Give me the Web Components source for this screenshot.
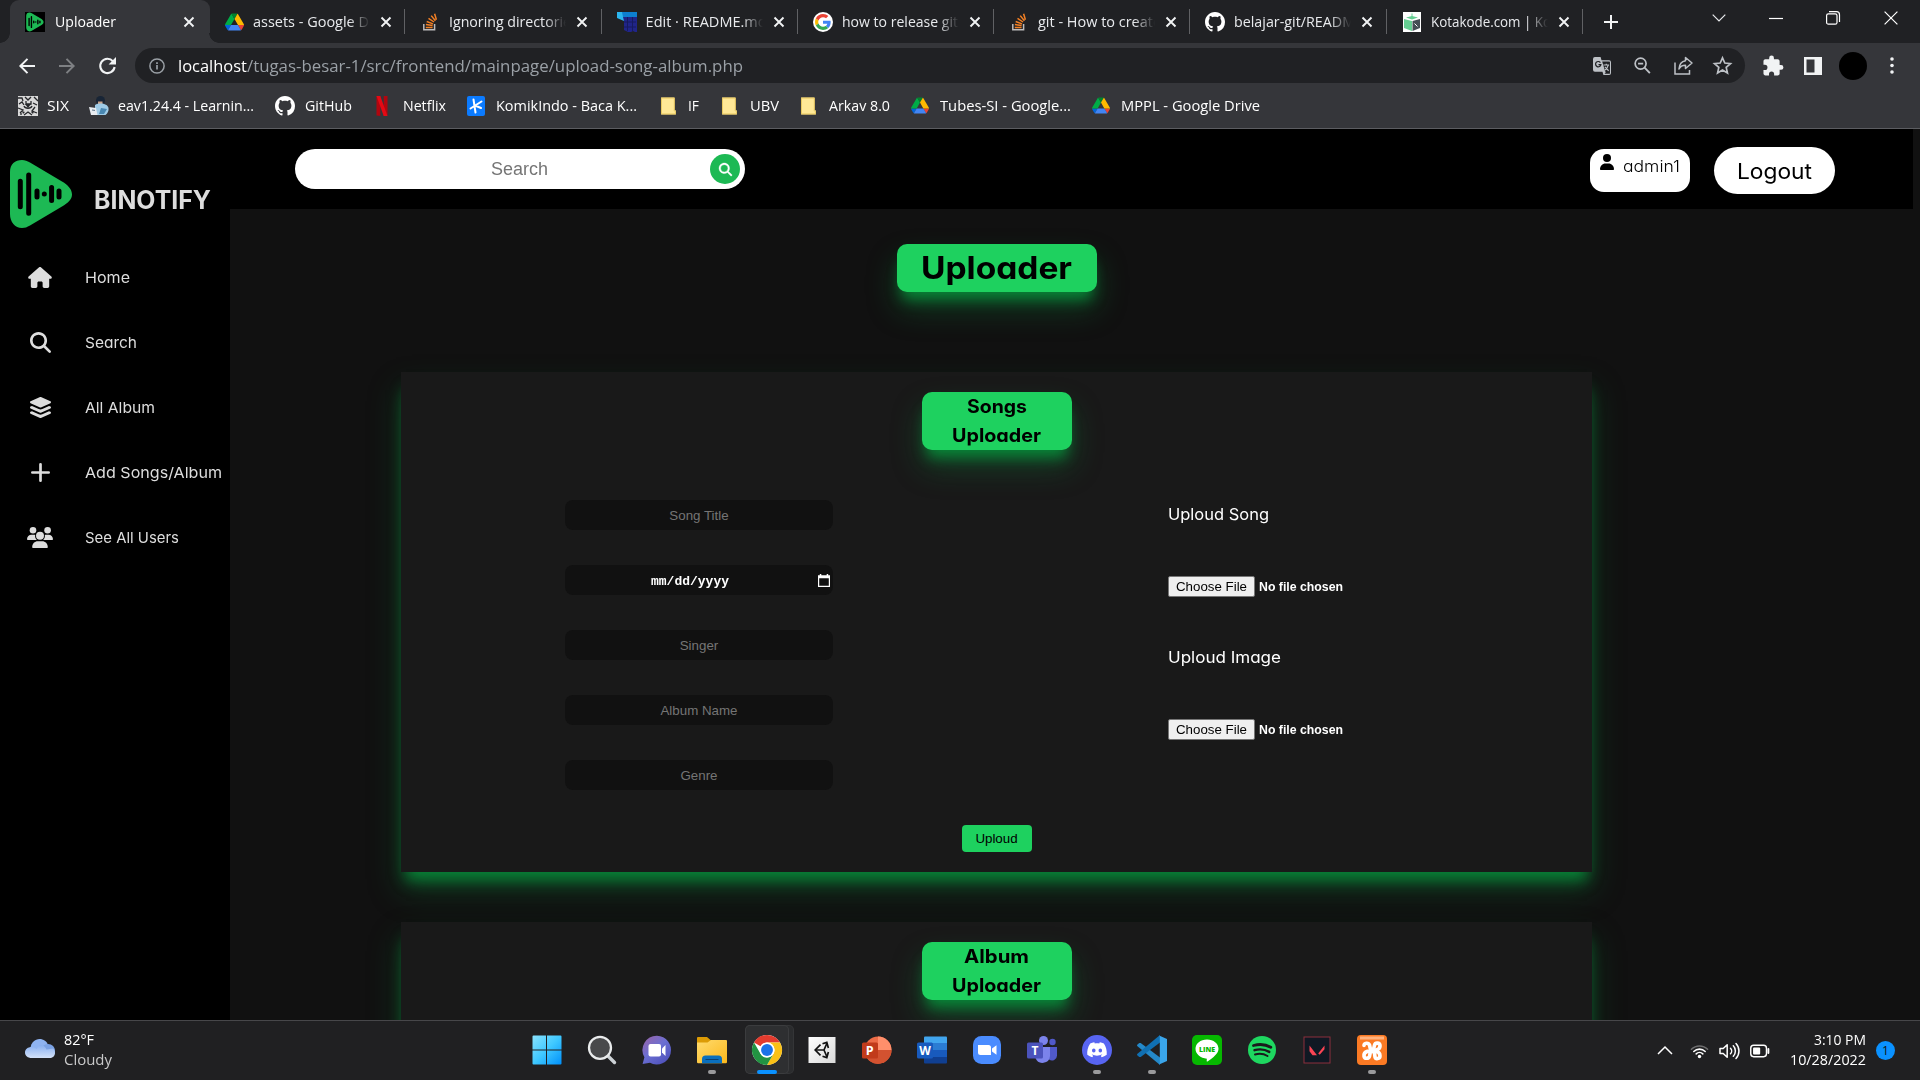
<!DOCTYPE html>
<html lang="en">
<head>
<meta charset="utf-8">
<title>Uploader</title>
<style>
html,body{margin:0;height:100%;background:#111;overflow:hidden}
body{font-family:"Open Sans","Noto Sans",sans-serif}
</style>
</head>
<body>
<desk-top></desk-top>
<script>
const GREEN='#1db954';
const GH='<path fill="#fff" d="M8 0C3.58 0 0 3.58 0 8c0 3.54 2.29 6.53 5.47 7.59.4.07.55-.17.55-.38 0-.19-.01-.82-.01-1.49-2.01.37-2.53-.49-2.69-.94-.09-.23-.48-.94-.82-1.13-.28-.15-.68-.52-.01-.53.63-.01 1.08.58 1.23.82.72 1.21 1.87.87 2.33.66.07-.52.28-.87.51-1.07-1.78-.2-3.64-.89-3.64-3.95 0-.87.31-1.59.82-2.15-.08-.2-.36-1.02.08-2.12 0 0 .67-.21 2.2.82.64-.18 1.32-.27 2-.27s1.36.09 2 .27c1.53-1.04 2.2-.82 2.2-.82.44 1.1.16 1.92.08 2.12.51.56.82 1.27.82 2.15 0 3.07-1.87 3.75-3.65 3.95.29.25.54.73.54 1.48 0 1.07-.01 1.93-.01 2.2 0 .21.15.46.55.38A8.01 8.01 0 0 0 16 8c0-4.42-3.58-8-8-8z"/>';
const SEARCH='M416 208c0 45.9-14.9 88.3-40 122.700L502.600 457.400c12.500 12.500 12.500 32.800 0 45.300s-32.800 12.500-45.300 0L330.700 376c-34.400 25.200-76.800 40-122.700 40C93.100 416 0 322.900 0 208S93.100 0 208 0S416 93.100 416 208zM208 352a144 144 0 1 0 0-288 144 144 0 1 0 0 288z';
const LOGO='<path fill="#1db954" d="M0 12C0 4 5 0 12 0c3 0 5 1 8 2.500L52 21.500c6 3.500 10 8 10 13s-4 8.500-10 12L20 65.500c-3 1.700-5 2.500-8 2.500C5 68 0 62 0 54z"/><g stroke="#000" stroke-linecap="round" stroke-width="5"><path d="M10.300 21.300v25.400M18.700 15v38.300M27 31v6M41.600 27.500v13M49 31v6"/><path d="M34.300 34v.01"/></g>';
const ICONS={
 logo:['0 0 62 68',LOGO],
 fav:['0 0 20 20','<path fill="#000" d="M0 0h20v20H0z"/><g transform="translate(1.200 .5) scale(.28)">'+LOGO+'</g>'],
 drive:['0 0 87.300 78','<path d="m6.600 66.850 3.850 6.650c.8 1.400 1.950 2.500 3.300 3.300l13.750-23.800h-27.500c0 1.550.4 3.100 1.200 4.500z" fill="#0066da"/><path d="m43.650 25-13.750-23.800c-1.350.8-2.500 1.900-3.300 3.300l-25.400 44a9.060 9.060 0 0 0 -1.200 4.500h27.500z" fill="#00ac47"/><path d="m73.550 76.800c1.350-.8 2.500-1.900 3.300-3.300l1.600-2.750 7.650-13.250c.8-1.400 1.200-2.950 1.200-4.500h-27.502l5.852 11.500z" fill="#ea4335"/><path d="m43.650 25 13.750-23.800c-1.350-.8-2.900-1.200-4.500-1.200h-18.500c-1.600 0-3.150.45-4.500 1.200z" fill="#00832d"/><path d="m59.800 53h-32.300l-13.750 23.800c1.350.8 2.900 1.200 4.500 1.200h50.800c1.600 0 3.150-.45 4.500-1.200z" fill="#4285f4"/><path d="m73.400 26.500-12.700-22c-.8-1.400-1.950-2.500-3.300-3.300l-13.750 23.800 16.150 28h27.450c0-1.550-.4-3.100-1.200-4.500z" fill="#ffba00"/>'],
 so:['0 0 16 18','<path d="M1.800 11v5.800h10.800V11" fill="none" stroke="#bcbbbb" stroke-width="1.500"/><g stroke="#f48024" stroke-width="1.500"><path d="M3.800 14.500h6.800M3.900 11.500l6.700 1.100M4.700 8.500l6.300 2.400M6.500 5.300l5.500 3.700M9.200 2.600l4.200 5.200M12.600.8l1.800 6"/></g>'],
 edit:['0 0 20 20','<path fill="#2bb5ee" d="M0 0h7v9L0 6z"/><path fill="#0d7fd0" d="M5 0h15v5H6z"/><path fill="#20258a" d="M6 5h14v15h-2l-2-1-2 1h-3l-4-2V9z"/><path stroke="#161b60" d="M10.500 5v14M15.500 5v14M7 10h12M7 15h12"/>'],
 google:['-6 -6 60 60','<circle cx="24" cy="24" r="30" fill="#fff"/><path fill="#EA4335" d="M24 9.500c3.540 0 6.710 1.220 9.210 3.600l6.850-6.850C35.900 2.380 30.470 0 24 0 14.620 0 6.510 5.380 2.560 13.220l7.980 6.190C12.430 13.720 17.740 9.500 24 9.500z"/><path fill="#4285F4" d="M46.980 24.550c0-1.570-.15-3.090-.38-4.550H24v9.020h12.940c-.58 2.960-2.260 5.480-4.780 7.180l7.730 6c4.510-4.180 7.090-10.360 7.090-17.650z"/><path fill="#FBBC05" d="M10.530 28.590c-.48-1.450-.76-2.990-.76-4.590s.27-3.140.76-4.590l-7.980-6.190C.92 16.460 0 20.120 0 24c0 3.880.92 7.540 2.560 10.780l7.970-6.190z"/><path fill="#34A853" d="M24 48c6.480 0 11.930-2.130 15.890-5.810l-7.730-6c-2.150 1.450-4.920 2.300-8.160 2.300-6.260 0-11.570-4.220-13.470-9.910l-7.980 6.190C6.510 42.620 14.620 48 24 48z"/>'],
 gh:['0 0 16 16',GH],
 kota:['0 0 18 20','<path fill="#fff" d="M0 0h18v20H0z"/><path fill="#65cf92" d="M1 7l8 2v10l-8-3zM3 5.500L9 4l6 1.500L9 7.500z"/><path fill="#454d54" d="M9.500 9L17 7v9l-7.500 3z"/><path stroke="#65cf92" d="M9 1.500V5"/><path stroke="#fff" d="M11.500 11.500l3 3"/>'],
 x:['0 0 12 12','<path d="M1.500 1.500l9 9M10.500 1.500l-9 9" stroke="#f1f3f4" stroke-width="1.900"/>'],
 plus:['0 0 14 14','<path d="M7 0v14M0 7h14" stroke="#f1f3f4" stroke-width="2"/>'],
 chev:['0 0 14 8','<path d="M.7.7L7 7 13.300.7" fill="none" stroke="#e8eaed" stroke-width="1.200"/>'],
 min:['0 0 14 14','<path d="M0 7.500h14" stroke="#fff" stroke-width="1.200"/>'],
 max:['0 0 14 14','<rect x=".6" y="2.800" width="10.400" height="10.400" rx="1.800" fill="none" stroke="#fff" stroke-width="1.200"/><path d="M3 .7h7.500a3 3 0 0 1 3 3V11" fill="none" stroke="#fff" stroke-width="1.200"/>'],
 wx:['0 0 14 14','<path d="M.6.6l12.800 12.800M13.400.6L.6 13.400" stroke="#fff" stroke-width="1.200"/>'],
 back:['0 0 16 16','<path d="M16 8H1.500M8.500.9L1.400 8l7.100 7.100" fill="none" stroke="#f1f3f4" stroke-width="2"/>'],
 fwd:['0 0 16 16','<path d="M0 8h14.500M7.500.9L14.600 8l-7.100 7.100" fill="none" stroke="#7e8083" stroke-width="2"/>'],
 reload:['0 0 17 17','<path d="M14 4.300A7.200 7.200 0 1 0 15.600 10" fill="none" stroke="#f1f3f4" stroke-width="2.100"/><path d="M17 0v7.400H9.600z" fill="#f1f3f4"/>'],
 info:['0 0 16 16','<circle cx="8" cy="8" r="7.100" fill="none" stroke="#9aa0a6" stroke-width="1.500"/><path d="M8 7v4.500M8 4.200v1.700" stroke="#9aa0a6" stroke-width="1.700"/>'],
 trans:['0 0 19 19','<path fill="#bdc1c6" d="M2 0h6l1 3.500h8a2 2 0 0 1 2 2V17a2 2 0 0 1-2 2h-6l-1-3.500H2a2 2 0 0 1-2-2V2a2 2 0 0 1 2-2z"/><path fill="#202124" d="M9.700 4.700h7.500a.7.700 0 0 1 .7.700v11.700a.7.700 0 0 1-.7.700h-5l1.600-2.300h-.9z"/><path fill="none" stroke="#bdc1c6" stroke-width="1.200" d="M11 8.500h6M14 7v1.500M16 8.800c-.5 2.200-1.700 4-3.700 5.200M12.500 10.500l4 4"/><path fill="none" stroke="#202124" stroke-width="1.300" d="M7.800 5.900A2.800 2.800 0 1 0 8.300 8H5.800"/>'],
 zoomout:['0 0 18 18','<circle cx="7" cy="7" r="5.800" fill="none" stroke="#bdc1c6" stroke-width="1.800"/><path d="M11.200 11.200l5.600 5.800M4.300 7h5.400" stroke="#bdc1c6" stroke-width="2"/>'],
 share:['0 0 19 19','<path d="M1 6.500V18h14.500v-4" fill="none" stroke="#bdc1c6" stroke-width="1.500"/><path d="M11.500 1.500L18 7l-6.500 5.500V9.200c-3.300 0-5.300 1.200-6.500 3.800.3-4.200 2.200-7.500 6.500-8.200z" fill="none" stroke="#bdc1c6" stroke-width="1.500" stroke-linejoin="round"/>'],
 star:['0 0 18 18','<path d="M9 1.800l2.200 4.900 5.400.5-4.100 3.600 1.200 5.300L9 13.300l-4.700 2.800 1.200-5.300L1.400 7.200l5.400-.5z" fill="none" stroke="#bdc1c6" stroke-width="1.600"/>'],
 puzzle:['1.500 1.500 20 20','<path fill="#f1f3f4" d="M20.500 11H19V7c0-1.100-.9-2-2-2h-4V3.500a2.500 2.500 0 0 0-5 0V5H4c-1.100 0-2 .9-2 2v3.800h1.500a2.700 2.700 0 0 1 0 5.400H2V20c0 1.100.9 2 2 2h3.800v-1.500a2.700 2.700 0 0 1 5.400 0V22H17c1.100 0 2-.9 2-2v-4h1.500a2.500 2.500 0 0 0 0-5z"/>'],
 panel:['0 0 18 18','<path fill="#f1f3f4" fill-rule="evenodd" d="M0 0h18v18H0zM2.500 2.500v13h8v-13z"/>'],
 dots:['0 0 4 18','<g fill="#f1f3f4"><circle cx="2" cy="2.200" r="1.900"/><circle cx="2" cy="9" r="1.900"/><circle cx="2" cy="15.800" r="1.900"/></g>'],
 six:['0 0 20 20','<path fill="#d9d9d9" d="M0 0h20v20H0z"/><g fill="none" stroke="#26272a" stroke-width="1.300"><path d="M0 2h4l1 3M7 1l3 3 3-3M16 1l4 4M1 8l3-2 2 3M8 5v3h5V5M15 7l4 2M0 12l5 2-3 3M6 10c1 3 7 3 8 0M17 11l-3 4 5 2M6 19l4-3 4 3M3 19v-2"/></g><path fill="#26272a" d="M7 8h6l-3 4zM4 15l3 1-2 2zM16 15l-3 1 2 2z"/>'],
 eav:['0 0 20 20','<circle cx="11.500" cy="4.500" r="4.500" fill="#182536"/><path fill="#c9a38b" d="M9 5.500h4.500v3.500H9z"/><path fill="#9fcbe6" d="M6 9c5-3 13-1 13.500 3 .5 3-1 5.500-3 7H6z"/><path fill="#4a88b2" d="M12 12l6 1-3 5h-5z"/><path fill="#e9edf1" d="M0 11l7 1 1.500 7H2z"/><path stroke="#5b7386" d="M3 14l3 .4"/>'],
 netflix:['0 0 11 20','<path fill="#b1060f" d="M0 0h3.800v20L0 19.500zM7.200 0H11v19.500l-3.800.5z"/><path fill="#e50914" d="M0 0h3.800L11 20H7.200z"/>'],
 komik:['0 0 18 20','<rect width="18" height="20" rx="2" fill="#0b7bff"/><path d="M6.500 3.500l2 13M14.500 5.500l-11 7M8 9.500l6 2.500" stroke="#fff" stroke-width="2" fill="none" stroke-linecap="round"/>'],
 folder:['0 0 16 18','<path fill="#ffe896" d="M0 0h14.500v13L16 14v4H0z"/><path fill="none" stroke="#e6c65c" d="M.5.5h13.700v12l-.2 1.500 1.400.5v3H.5z"/>'],
 home:['0 0 576 512','<path fill="#ddd" d="M575.800 255.500c0 18-15 32.100-32 32.100h-32l.7 160.200c0 2.700-.2 5.400-.5 8.100V472c0 22.100-17.900 40-40 40H392c-22.100 0-40-17.900-40-40V384c0-17.700-14.300-32-32-32H256c-17.700 0-32 14.300-32 32v88c0 22.100-17.900 40-40 40H104c-22.100 0-40-17.900-40-40V287.600H32c-18 0-32-14-32-32.100c0-9 3-17 10-24L266.400 8c7-7 15-8 22-8s15 2 21 7L564.800 231.500c8 7 12 15 11 24z"/>'],
 search:['0 0 512 512','<path fill="#ddd" d="'+SEARCH+'"/>'],
 searchw:['0 0 512 512','<path fill="#fff" stroke="#fff" stroke-width="14" d="'+SEARCH+'"/>'],
 layers:['0 0 512 512','<path fill="#ddd" d="M232.500 5.200c14.900-6.900 32.100-6.900 47 0l218.600 101c8.500 3.900 13.900 12.400 13.900 21.800s-5.400 17.900-13.900 21.800l-218.600 101c-14.900 6.900-32.100 6.900-47 0L13.900 149.800C5.400 145.800 0 137.300 0 128s5.400-17.900 13.900-21.800L232.500 5.200zM48.100 218.400l164.300 75.900c27.700 12.800 59.600 12.800 87.300 0L463.900 218.400l34.100 15.800c8.500 3.900 13.900 12.400 13.900 21.800s-5.400 17.900-13.900 21.800l-218.600 101c-14.900 6.900-32.100 6.900-47 0L13.900 277.800C5.400 273.800 0 265.300 0 256s5.400-17.900 13.900-21.800L48.100 218.400zM13.900 362.200l34.200-15.800 164.300 75.900c27.700 12.800 59.600 12.800 87.300 0L463.900 346.400l34.100 15.800c8.500 3.900 13.900 12.400 13.900 21.800s-5.400 17.900-13.900 21.800l-218.600 101c-14.900 6.900-32.100 6.900-47 0L13.900 405.800C5.400 401.800 0 393.300 0 384s5.400-17.900 13.900-21.800z"/>'],
 add:['0 0 17 17','<path d="M8.500 1.200v14.600M1.200 8.500h14.600" stroke="#ddd" stroke-width="2.400" stroke-linecap="round"/>'],
 users:['0 0 26 21','<g fill="#ddd"><circle cx="6" cy="3.300" r="3.300"/><circle cx="20.600" cy="3.300" r="3.300"/><circle cx="13" cy="8.800" r="4"/><path d="M0 12.300C0 9.600 2 7.800 4.500 7.800h2.300c.5 0 1 .1 1.400.3-.4 2 .3 3.700 1.700 4.900H.8c-.5 0-.8-.3-.8-.7zM26 12.300c0-2.700-2-4.500-4.500-4.500h-2.300c-.5 0-1 .1-1.400.3.400 2-.3 3.700-1.700 4.900h9.100c.5 0 .8-.3.800-.7zM5.200 20c0-3.400 2.500-5.800 5.600-5.800h4.400c3.100 0 5.600 2.400 5.600 5.800 0 .6-.4 1-1 1H6.200c-.6 0-1-.4-1-1z"/></g>'],
 user:['0 0 14 16','<circle cx="7" cy="4" r="4" fill="#000"/><path fill="#000" d="M0 15.200C0 12 2.400 9.500 5.500 9.500h3c3.100 0 5.500 2.500 5.500 5.700 0 .5-.3.800-.8.800H.8c-.5 0-.8-.3-.8-.8z"/>'],
 cal:['0 0 12 13','<path fill="#fff" fill-rule="evenodd" d="M1.800 0h1.500v1.200h5.400V0h1.500v1.200H12V13H0V1.200h1.800zM1.200 4.200v7.600h9.600V4.200z"/>'],
 cloud:['0 0 30 20','<defs><linearGradient id="c" x1="0" y1="0" x2="0" y2="1"><stop offset="0" stop-color="#88aff0"/><stop offset="1" stop-color="#d3e1f8"/></linearGradient></defs><path fill="#8fb3f0" d="M5.500 9C6 3.500 10 0 14.500 0c4 0 7.500 2.500 8.500 6v8H6z"/><path fill="#7ba2e4" d="M16 12c0-4 3-7 7-7s7 3 7 7-3 7-7 7h-6z"/><path fill="url(#c)" d="M6.500 19C3 19 0 16.800 0 13.500S3 8 6.500 8c2 0 3.600.8 5 2l3-4c4 0 6 2 7 4.500l6.500-1c1.300 1 2 2.500 2 4.500 0 3-2.500 5-5.500 5z"/>'],
 start:['0 0 30 30','<defs><linearGradient id="s" x1="0" y1="0" x2="1" y2="1"><stop offset="0" stop-color="#8ae3fe"/><stop offset=".5" stop-color="#3fc8ff"/><stop offset="1" stop-color="#0090fb"/></linearGradient></defs><path fill="url(#s)" d="M1.500.5H14v14H.5v-13a1 1 0 0 1 1-1zM15 .5h13.500a1 1 0 0 1 1 1v13H15zM.5 15.500H14v14H1.500a1 1 0 0 1-1-1zM15 15.500h14.500v13a1 1 0 0 1-1 1H15z"/>'],
 tsearch:['0 0 30 30','<path d="M20 20l7.500 7.500" stroke="#cdd2d6" stroke-width="3.400" stroke-linecap="round"/><circle cx="13" cy="12.800" r="11" fill="#48494b" stroke="#e9ebec" stroke-width="2.300"/>'],
 chat:['0 0 30 30','<defs><linearGradient id="h" x1="0" y1="0" x2=".8" y2="1"><stop offset="0" stop-color="#9c63a5"/><stop offset=".5" stop-color="#6b6fd2"/><stop offset="1" stop-color="#4d50bb"/></linearGradient></defs><path fill="url(#h)" d="M15 .8A14.300 14.300 0 1 1 8 27.700L.6 29l1.800-6.800A14.300 14.300 0 0 1 15 .8z"/><rect x="6.500" y="9" width="12.500" height="12.500" rx="2" fill="#fff"/><path d="M20 13.500l3.500-3.500v11L20 17.500z" fill="#fff"/>'],
 explorer:['0 0 30 30','<defs><linearGradient id="f" x1="0" y1="0" x2="1" y2="1"><stop offset="0" stop-color="#ffdb6e"/><stop offset="1" stop-color="#fbb81c"/></linearGradient></defs><path fill="#dc9b05" d="M1 2h9l3.500 3H29v6H0V3a1 1 0 0 1 1-1z"/><path fill="url(#f)" d="M0 7.500h10.500L14 5h15a1 1 0 0 1 1 1v21a1.200 1.200 0 0 1-1.200 1.200H1.200A1.200 1.200 0 0 1 0 27z"/><path fill="#0a6fbd" d="M5 28.200V24a3.500 3.500 0 0 1 3.500-3.500h13A3.500 3.500 0 0 1 25 24v4.200z"/><path stroke="#083f74" d="M8.500 24.500h13"/>'],
 chrome:['0 0 48 48','<circle cx="24" cy="24" r="24" fill="#fff"/><path fill="#e33b2e" d="M24 0a24 24 0 0 1 20.800 12H24a12 12 0 0 0-10.400 6L3.200 12A24 24 0 0 1 24 0z"/><path fill="#fbc116" d="M44.800 12A24 24 0 0 1 24 48l10.400-18A12 12 0 0 0 34.400 18 12 12 0 0 0 24 12z"/><path fill="#229342" d="M24 48A24 24 0 0 1 3.200 12l10.400 18A12 12 0 0 0 34.400 30z"/><circle cx="24" cy="24" r="12" fill="#fff"/><circle cx="24" cy="24" r="9.500" fill="#1a73e8"/>'],
 unity:['0 0 30 30','<defs><linearGradient id="u" x1="0" y1="0" x2="1" y2="1"><stop offset="0" stop-color="#fff"/><stop offset="1" stop-color="#d9d9d9"/></linearGradient></defs><path fill="url(#u)" d="M1.500 2h27v26h-27z"/><g fill="none" stroke="#111" stroke-width="1.700"><path d="M13.500 9.600L8.200 15l5.300 5.400M15.500 8.800l4.300-1.400 1.600 5.600M15.500 21.200l4.300 1.400 1.600-5.600"/><path d="M8.500 15H17M17 15l3-7M17 15l3 7"/></g>'],
 ppt:['0 0 30 30','<circle cx="16" cy="15" r="13.500" fill="#ed6c47"/><path fill="#ff8f6b" d="M16 1.500A13.500 13.500 0 0 1 29.500 15H16z"/><path fill="#d35230" d="M2.500 15h27A13.500 13.500 0 0 1 3 19z"/><rect x="0" y="7.500" width="16" height="16" rx="1.500" fill="#c13b1b"/><text x="7.700" y="20" font-family="Open Sans,sans-serif" font-size="12.500" font-weight="700" text-anchor="middle" fill="#fff">P</text>'],
 word:['0 0 30 30','<path fill="#41a5ee" d="M8 1.500h21q1 0 1 1V8H7V2.500q0-1 1-1z"/><path fill="#2b7cd3" d="M7 8h23v7H7z"/><path fill="#185abd" d="M7 15h23v7H7z"/><path fill="#103f91" d="M7 22h23v5.500q0 1-1 1H8q-1 0-1-1z"/><rect x="0" y="7.500" width="16" height="16" rx="1.500" fill="#185abd"/><text x="8" y="20" font-family="Open Sans,sans-serif" font-size="12" font-weight="700" text-anchor="middle" fill="#fff">W</text>'],
 zoom:['0 0 30 30','<rect x="1" y="1" width="28" height="28" rx="8.500" fill="#4a8cff"/><path fill="#fff" d="M6 10h10.500a2.500 2.500 0 0 1 2.500 2.500V20H8.500A2.500 2.500 0 0 1 6 17.500zM20 13.500l4.500-3.300v9.600L20 16.500z"/>'],
 teams:['0 0 30 30','<circle cx="25.500" cy="7" r="3.200" fill="#5059c9"/><circle cx="16.500" cy="5.500" r="4.500" fill="#7b83eb"/><path fill="#5059c9" d="M20 12h10v8.500a5 5 0 0 1-8 4z"/><path fill="#7b83eb" d="M9 12h14v9a7.500 7.500 0 0 1-14.500 2z"/><rect x="0" y="7.500" width="16" height="16" rx="1.500" fill="#4b53bc"/><text x="8" y="20" font-family="Open Sans,sans-serif" font-size="12" font-weight="700" text-anchor="middle" fill="#fff">T</text>'],
 discord:['0 0 30 30','<circle cx="15" cy="15" r="15" fill="#5865f2"/><path fill="#fff" transform="translate(5.200 5) scale(.82)" d="M20.317 4.370a19.800 19.800 0 0 0-4.885-1.515.074.074 0 0 0-.079.037c-.21.375-.444.865-.608 1.250-1.845-.276-3.680-.276-5.487 0-.164-.393-.406-.874-.618-1.250a.077.077 0 0 0-.079-.037A19.740 19.740 0 0 0 3.677 4.370C.533 9.046-.319 13.580.099 18.058c2.053 1.508 4.072 2.480 6.077 3.057.48-.63.873-1.295 1.226-1.994-.68-.25-1.310-.56-1.914-.998l.372-.300c3.928 1.793 8.180 1.793 12.140 0l.373.300c-.6.430-1.220.740-1.914.998.360.698.772 1.363 1.225 1.994 2.050-.600 4.030-1.500 6.117-3.057.5-5.177-.838-9.674-3.480-13.688zM8.020 15.331c-1.183 0-2.157-1.086-2.157-2.419s.956-2.419 2.157-2.419c1.211 0 2.176 1.095 2.157 2.419 0 1.333-.956 2.419-2.157 2.419zm7.975 0c-1.183 0-2.157-1.086-2.157-2.419s.955-2.419 2.157-2.419c1.211 0 2.176 1.095 2.157 2.419 0 1.333-.946 2.419-2.157 2.419z"/>'],
 vscode:['0 0 30 30','<path fill="#2489ca" d="M0 10l2.200-2h1.500L23 22.500V30L.2 11z"/><path fill="#1070b3" d="M0 20l2.200 2h1.500L23 7.500V0L.2 19z"/><path fill="#3aa5ea" d="M21.500.3L30 4v22l-8.500 3.700c1-.4 1.300-1.200 1.300-2V2.300c0-1-.3-1.700-1.300-2z"/>'],
 line:['0 0 30 30','<rect width="30" height="30" rx="5" fill="#06b800"/><path fill="#fff" d="M15 4.500c6.500 0 11.500 4 11.500 9.300 0 4.700-5 8.700-11 12.700-.8.400-1-.2-.6-2.800C8.500 23.300 3.500 19 3.500 13.800 3.500 8.500 8.500 4.500 15 4.500z"/><text x="15" y="16.500" font-family="Open Sans,sans-serif" font-size="7" font-weight="800" text-anchor="middle" fill="#06b800">LINE</text>'],
 spotify:['0 0 30 30','<circle cx="15" cy="15" r="14" fill="#1ed760"/><g fill="none" stroke="#1a1a1c" stroke-linecap="round"><path stroke-width="2.800" d="M6.500 10.500c6-1.700 12.500-1 17.300 1.800"/><path stroke-width="2.400" d="M7.500 15.200c5-1.500 10.500-.8 14.800 1.700"/><path stroke-width="2" d="M8 19.500c4.500-1.200 9-.6 12.500 1.500"/></g>'],
 valo:['0 0 30 30','<rect x="2" y="2" width="26" height="26" fill="#101823" stroke="#8b2f3c"/><path fill="#fa4454" d="M7.500 10.500l7.500 9.700h-4.500l-3-4zM22.500 10.500l-6.300 8 1.500 1.200 4.800-5.500z"/>'],
 xampp:['0 0 30 30','<rect width="30" height="30" rx="4" fill="#fb7a24"/><path fill="#ffb27e" d="M3 1.500h24v3H3z"/><g fill="none" stroke="#fff" stroke-width="3.600" stroke-linecap="round" stroke-linejoin="round"><path d="M7 10.500c0-2.700 4.500-3.200 5.500-.5l1 4.500 4 3.500.5 4c.6 2.500 5 2 5-1 0-2.500-1.500-4.300-4-5"/><path d="M13.500 16.500l-3-.3c-2.500.8-3.800 2.700-3.500 5 .4 2.700 4.700 2.800 5.500 0zM16.500 14.500l3 .5c2.500-.8 3.800-2.500 3.500-4.700-.4-2.800-4.800-3-5.500-.2z"/></g>'],
 up:['0 0 16 9','<path d="M1 8l7-7 7 7" fill="none" stroke="#fff" stroke-width="1.500"/>'],
 wifi:['0 0 20 16','<g fill="none" stroke="#fff" stroke-width="1.600" stroke-linecap="round"><path opacity=".35" d="M1.500 6.200a12 12 0 0 1 17 0"/><path d="M4 8.500a8.500 8.500 0 0 1 12 0"/><path d="M6.500 11a5 5 0 0 1 7 0"/></g><circle cx="10" cy="13.800" r="1.800" fill="#fff"/>'],
 sound:['0 0 21 18','<g fill="none" stroke="#fff" stroke-width="1.500" stroke-linecap="round" stroke-linejoin="round"><path d="M1 6.500v5h3.200l4 3.800V2.700l-4 3.800zM11.500 6.200a4 4 0 0 1 0 5.600M14.300 3.800a7.500 7.500 0 0 1 0 10.400M17 1.500a11 11 0 0 1 0 15"/></g>'],
 batt:['0 0 21 14','<rect x=".8" y="1" width="16.500" height="12" rx="3" fill="none" stroke="#fff" stroke-width="1.500"/><rect x="3.200" y="3.400" width="7.500" height="7.200" rx="1" fill="#fff"/><path d="M19.300 4.800v4.400" stroke="#fff" stroke-width="2" stroke-linecap="round"/>']
};
/* registers an element whose shadow root is filled from css + markup */
function el(name,css,html,after){
  customElements.define(name,class extends HTMLElement{
    connectedCallback(){
      if(this.shadowRoot)return;
      const t=document.createElement('template');
      t.innerHTML='<style>'+css+'</style>'+(typeof html==='function'?html(this):html);
      this.attachShadow({mode:'open'}).append(t.content.cloneNode(true));
      if(after)after(this);
    }
  });
}
const POP='font-family:Inter,"Open Sans",sans-serif;font-feature-settings:"cv11";';
const fits=[];
/* text stretched horizontally so that it fills the width in its w attribute */
el('fit-text',':host{display:inline-block;white-space:pre;flex:none}span{display:inline-block;transform-origin:0 50%}','<span><slot></slot></span>',e=>fits.push(e));
el('ui-icon',':host{display:block;flex:none}svg{display:block;width:100%;height:100%;overflow:visible}',
  e=>{const i=ICONS[e.getAttribute('n')];return `<svg viewBox="${i[0]}">${i[1]}</svg>`},
  e=>{e.style.width=e.getAttribute('w')+'px';e.style.height=(e.getAttribute('h')||e.getAttribute('w'))+'px'});

el('browser-tab',`:host{display:flex;align-items:center;width:196.300px;height:43px;box-sizing:border-box;padding-left:15px;flex:none;color:#e8eaed;font-size:14.500px}
 .i{width:20px;display:flex;justify-content:center}
 .t{width:117px;margin-left:9px;overflow:hidden;-webkit-mask-image:linear-gradient(90deg,#000 82%,transparent 100%);mask-image:linear-gradient(90deg,#000 82%,transparent 100%)}
 .s{width:1px;height:25px;background:#606164;margin-left:auto}
 ui-icon.x{margin-left:10px}
 :host([active]){background:#35363a;border-radius:9px 9px 0 0;width:200px;margin-right:-1px}
 :host([active]) .s{display:none}
 :host([active]) .t{color:#fff;width:118px;margin-left:10px;-webkit-mask-image:none;mask-image:none}`,
 e=>`<div class="i"><ui-icon n="${e.getAttribute('icon')}" w="${e.getAttribute('iw')||20}" h="20"></ui-icon></div><div class="t"><slot></slot></div><ui-icon class="x" n="x" w="12"></ui-icon><div class="s"></div>`);

el('tab-strip',`:host{display:flex;align-items:center;height:43px;background:#202124}
 .foot{width:10px;height:43px;background:radial-gradient(circle at 0 33px,#202124 9.500px,#35363a 10px);clip-path:inset(33px 0 0 0);flex:none}
 .r{position:relative;width:0}.r i{position:absolute;left:0;top:11.500px;width:10px;height:10px;background:radial-gradient(circle at 100% 0,#202124 9.500px,#35363a 10px)}
 .plus{margin-left:21px}.w{margin-left:auto;display:flex;align-items:center;padding-right:22px;height:36px;align-self:flex-start}`,
 `<div class="foot"></div>
 <browser-tab active icon="fav"><fit-text w="61">Uploader</fit-text></browser-tab><div class="r"><i></i></div>
 <browser-tab icon="drive" iw="19"><fit-text w="116">assets - Google D</fit-text></browser-tab>
 <browser-tab icon="so" iw="16"><fit-text w="122">Ignoring directorie</fit-text></browser-tab>
 <browser-tab icon="edit"><fit-text w="121">Edit · README.md</fit-text></browser-tab>
 <browser-tab icon="google"><fit-text w="116">how to release git</fit-text></browser-tab>
 <browser-tab icon="so" iw="16"><fit-text w="123">git - How to create</fit-text></browser-tab>
 <browser-tab icon="gh"><fit-text w="121">belajar-git/READM</fit-text></browser-tab>
 <browser-tab icon="kota"><fit-text w="120">Kotakode.com | Ko</fit-text></browser-tab>
 <ui-icon class="plus" n="plus" w="14"></ui-icon>
 <div class="w"><ui-icon n="chev" w="14" h="8"></ui-icon><ui-icon n="min" w="14" style="margin-left:43px"></ui-icon><ui-icon n="max" w="14" style="margin-left:43px"></ui-icon><ui-icon n="wx" w="14" style="margin-left:44px"></ui-icon></div>`);

el('address-bar',`:host{display:flex;align-items:center;height:35px;padding:5px 0;background:#35363a;color:#9aa0a6;font-size:17px}
 .b{display:flex;align-items:center;height:35px;width:1609.500px;box-sizing:border-box;border-radius:18px;background:#202124;margin-left:19px;padding-left:14px}
 b{font-weight:400;color:#fff}.dot{width:28px;height:28px;border-radius:50%;background:#000;margin-left:17px}`,
 `<ui-icon n="back" w="16" style="margin-left:19px"></ui-icon><ui-icon n="fwd" w="16" style="margin-left:24px"></ui-icon><ui-icon n="reload" w="17" style="margin-left:24px"></ui-icon>
 <div class="b"><ui-icon n="info" w="16"></ui-icon><fit-text w="69" style="margin-left:13px"><b>localhost</b></fit-text><fit-text w="496">/tugas-besar-1/src/frontend/mainpage/upload-song-album.php</fit-text>
 <ui-icon n="trans" w="18" style="margin-left:auto"></ui-icon><ui-icon n="zoomout" w="17" style="margin-left:23px"></ui-icon><ui-icon n="share" w="19" style="margin-left:23px"></ui-icon><ui-icon n="star" w="19" style="margin-left:20px;margin-right:13px"></ui-icon></div>
 <ui-icon n="puzzle" w="19" style="margin-left:18px"></ui-icon><ui-icon n="panel" w="18" style="margin-left:22px"></ui-icon><div class="dot"></div><ui-icon n="dots" w="4" h="17" style="margin-left:23px"></ui-icon>`);

el('book-mark',`:host{display:flex;align-items:center;flex:none}`,
 e=>{const g=a=>e.getAttribute(a);return `<ui-icon n="${g('icon')}" w="${g('iw')}" h="${g('ih')||20}"></ui-icon><fit-text w="${g('tw')}" style="margin-left:${g('gap')}px">${e.dataset.t}</fit-text>`});
const BM=[['six',20,20,9,22,'SIX',18],['eav',20,20,9,136,'eav1.24.4 - Learnin...',20],['gh',20,20,10,47,'GitHub',21],['netflix',12,20,15,43,'Netflix',24],['komik',18,20,11,141,'KomikIndo - Baca K...',21],['folder',15,18,12,11,'IF',24],['folder',15,18,13,29,'UBV',22.500],['folder',15,18,13,61,'Arkav 8.0',22],['drive',18,17,11,131,'Tubes-SI - Google...',21],['drive',18,17,11,139,'MPPL - Google Drive',21]];
el('bookmark-bar',':host{display:flex;align-items:center;height:35px;padding-bottom:5px;background:#35363a;border-bottom:1px solid #5c5d61;color:#fff;font-size:14.500px}',
 BM.map(b=>`<book-mark icon="${b[0]}" iw="${b[1]}" ih="${b[2]}" gap="${b[3]}" tw="${b[4]}" data-t="${b[5]}" style="margin-left:${b[6]}px"></book-mark>`).join(''));

el('side-item',`:host{display:flex;align-items:center;height:65px;color:#ddd;font-size:15px;${POP}}.i{width:80px;display:flex;justify-content:center;margin-right:5px}`,
 e=>`<div class="i"><ui-icon n="${e.getAttribute('icon')}" w="${e.getAttribute('iw')}" h="${e.getAttribute('ih')}"></ui-icon></div><slot></slot>`);
el('side-bar',`:host{display:flex;flex-direction:column;width:230px;flex:none;background:#000}
 .brand{display:flex;height:84.500px;padding:31px 0 0 10px;color:#ddd;${POP}font-weight:700;font-size:25px;line-height:30px}fit-text.n{margin:25px 0 0 22px}`,
 `<div class="brand"><ui-icon n="logo" w="62" h="68"></ui-icon><fit-text class="n" w="117">BINOTIFY</fit-text></div>
 <side-item icon="home" iw="24" ih="21"><fit-text w="45">Home</fit-text></side-item>
 <side-item icon="search" iw="21" ih="21"><fit-text w="52">Search</fit-text></side-item>
 <side-item icon="layers" iw="21" ih="21"><fit-text w="70">All Album</fit-text></side-item>
 <side-item icon="add" iw="19" ih="19"><fit-text w="137">Add Songs/Album</fit-text></side-item>
 <side-item icon="users" iw="26" ih="21"><fit-text w="94">See All Users</fit-text></side-item>`);

el('top-bar',`:host{display:flex;align-items:flex-start;height:80px;flex:none;width:1683px;background:#000;color:#000;${POP}}
 .s{display:flex;align-items:center;width:450px;height:40px;border-radius:20px;background:#fff;margin:20px 0 0 65px;font-family:"Liberation Sans",Arial,sans-serif;color:#757575;font-size:18px}
 .s fit-text{margin-left:196px}.g{display:flex;align-items:center;justify-content:center;width:30px;height:30px;border-radius:50%;background:${GREEN};margin-left:auto;margin-right:5px}
 .u{display:flex;width:100px;height:43px;border-radius:14px;background:#fff;margin:20px 0 0 845px;box-sizing:border-box;padding:5px 0 0 10px;font-size:16px;font-weight:300;line-height:24px}
 .u fit-text{margin-left:9px}
 .l{display:flex;align-items:center;justify-content:center;width:121px;height:47px;border-radius:24px;background:#fff;margin:18px 0 0 24px;font-size:22px;font-weight:400}`,
 `<div class="s"><fit-text w="57">Search</fit-text><div class="g"><ui-icon n="searchw" w="13"></ui-icon></div></div>
 <div class="u"><ui-icon n="user" w="14" h="16"></ui-icon><fit-text w="57">admin1</fit-text></div>
 <div class="l"><fit-text w="75">Logout</fit-text></div>`);

el('glow-label',`:host{display:flex;flex-direction:column;align-items:center;justify-content:center;background:#1ed15f;border-radius:10px;color:#000;font-weight:700;flex:none;${POP}
 box-shadow:0 12px 14px -5px rgba(8,140,58,.92),0 17px 30px rgba(16,120,54,.42)}`,'<slot></slot>');
el('form-field',`:host{display:flex;align-items:center;justify-content:center;width:268px;height:30px;border-radius:8px;background:#111;color:#757575;font:13.333px "Liberation Sans",Arial,sans-serif}`,'<slot></slot>');
el('date-field',`:host{display:flex;align-items:center;width:268px;height:30px;border-radius:8px;background:#111;color:#fff;font:700 12.800px "Liberation Mono","DejaVu Sans Mono",monospace}
 fit-text{margin-left:86px;padding-top:2px}ui-icon{margin-left:auto;margin-right:3px}`,'<fit-text w="78">mm/dd/yyyy</fit-text><ui-icon n="cal" w="12" h="13"></ui-icon>');
el('file-field',`:host{display:flex;align-items:center;color:#fff;font:700 12.500px "Liberation Sans",Arial,sans-serif}
 span{display:flex;align-items:center;justify-content:center;width:87px;height:21px;box-sizing:border-box;border:1px solid #767676;border-radius:2px;background:#efefef;color:#000;font-weight:400;font-size:13.333px;margin-right:4px}`,
 '<span><fit-text w="71">Choose File</fit-text></span><fit-text w="84">No file chosen</fit-text>');
el('upload-card',`:host{display:flex;flex-direction:column;align-items:center;width:1191px;height:500px;flex:none;background:#191919;box-sizing:border-box;padding-top:20px;
 box-shadow:0 13px 14px -5px rgba(8,138,58,.92),0 18px 30px rgba(16,116,52,.38)}`,'<slot name="title"></slot><slot></slot>');
el('song-form',`:host{display:flex;flex-direction:column;align-items:center;width:100%;margin-top:29.250px;color:#fff}
 .c{display:flex;align-self:stretch;padding-left:164px}.l{display:flex;flex-direction:column;gap:35px;padding-top:20.750px}
 .r{display:flex;flex-direction:column;margin-left:335px;${POP}font-size:15.500px;font-weight:400}.r>div{display:flex;align-items:center;height:71.500px}.r>div>fit-text{margin-bottom:2px}
 .b{display:flex;align-items:center;justify-content:center;width:70px;height:27px;border-radius:4px;background:#1ed15f;color:#000;font:13.333px "Liberation Sans",Arial,sans-serif;margin-top:35px}`,
 `<div class="c"><div class="l"><form-field>Song Title</form-field><date-field></date-field><form-field>Singer</form-field><form-field>Album Name</form-field><form-field>Genre</form-field></div>
 <div class="r"><div><fit-text w="101">Uploud Song</fit-text></div><div><file-field></file-field></div><div><fit-text w="113">Uploud Image</fit-text></div><div><file-field></file-field></div></div></div><div class="b">Uploud</div>`);
el('upload-page',`:host{display:flex;flex-direction:column;flex:1;min-width:0;background:#111}
 main{display:flex;flex-direction:column;align-items:center;width:1191px;margin-left:171px;padding-top:35px}
 .h{width:200px;height:48px;box-sizing:border-box;padding-bottom:2px;font-size:31px}.t{width:150px;height:58px;font-size:18.500px;line-height:29px}
 upload-card{margin-bottom:50px}`,
 `<top-bar></top-bar><main><glow-label class="h"><fit-text w="151">Uploader</fit-text></glow-label>
 <upload-card style="margin-top:80px"><glow-label class="t" slot="title"><fit-text w="60">Songs</fit-text><fit-text w="89">Uploader</fit-text></glow-label><song-form></song-form></upload-card>
 <upload-card><glow-label class="t" slot="title"><fit-text w="65">Album</fit-text><fit-text w="89">Uploader</fit-text></glow-label></upload-card></main>`);

el('task-icon',`:host{display:flex;flex-direction:column;align-items:center;width:55px;height:59px;flex:none}
 .p{display:flex;flex-direction:column;align-items:center;width:44px;height:49px;margin-top:4px;border-radius:5px;box-sizing:border-box;padding-top:10px}
 i{display:block;width:8px;height:4px;border-radius:2px;background:#9a9a9c;margin-top:5px;visibility:hidden;flex:none}
 :host([open]) i,:host([active]) i{visibility:visible}:host([active]) i{width:20px;background:#0a91ff}
 :host([active]) .p{background:#2e2f31;box-shadow:inset 0 0 0 1px #3b3c3e,5px 0 0 -1px #2b2c2e,5px 0 0 0 #343537}`,
 e=>`<div class="p"><ui-icon n="${e.getAttribute('n')}" w="30"></ui-icon><i></i></div>`);
el('task-bar',`:host{display:flex;height:59px;border-top:1px solid #47474a;background:#202022;color:#fff;font-size:14.500px;flex:none}
 .w{display:flex;width:519.500px;padding-left:25px;box-sizing:border-box;flex:none}.w div,.d{display:flex;flex-direction:column;line-height:20px;padding-top:9px}.w div{margin-left:9px}
 .c{color:#c8c8c9}.a{display:flex}.t{display:flex;margin-left:auto;align-items:center;height:59px}.d{align-items:flex-end;width:76px;padding:0;margin-left:20px;margin-bottom:2px}
 .n{width:19px;height:19px;border-radius:50%;background:#0a91ff;color:#111;font-size:12px;line-height:19px;text-align:center;margin:0 25px 1px 10px}`,
 `<div class="w"><ui-icon n="cloud" w="30" h="20" style="margin-top:18px"></ui-icon><div><fit-text w="30">82°F</fit-text><fit-text class="c" w="48">Cloudy</fit-text></div></div>
 <div class="a">${['start','tsearch','chat','explorer:open','chrome:active','unity','ppt','word','zoom','teams','discord:open','vscode:open','line','spotify','valo','xampp:open'].map(s=>{const[a,b='']=s.split(':');return `<task-icon n="${a}" ${b}></task-icon>`}).join('')}</div>
 <div class="t"><ui-icon n="up" w="16" h="9"></ui-icon><ui-icon n="wifi" w="19" h="16" style="margin-left:17px"></ui-icon><ui-icon n="sound" w="21" h="18" style="margin-left:10px"></ui-icon><ui-icon n="batt" w="20" h="14" style="margin-left:10px"></ui-icon>
 <div class="d"><fit-text w="52">3:10 PM</fit-text><fit-text w="76">10/28/2022</fit-text></div><div class="n">1</div></div>`);

el('desk-top',':host{display:flex;flex-direction:column;width:1920px;height:1080px;overflow:hidden}tab-strip,address-bar,bookmark-bar{flex:none}.v{display:flex;height:891px;flex:none;overflow:hidden}',
 '<tab-strip></tab-strip><address-bar></address-bar><bookmark-bar></bookmark-bar><div class="v"><side-bar></side-bar><upload-page></upload-page></div><task-bar></task-bar>');

for(const e of fits){
  const w=+e.getAttribute('w'),s=e.shadowRoot.querySelector('span'),nat=s.getBoundingClientRect().width;
  if(nat){s.style.transform='scaleX('+w/nat+')';e.style.width=w+'px'}
}
</script>
</body>
</html>
